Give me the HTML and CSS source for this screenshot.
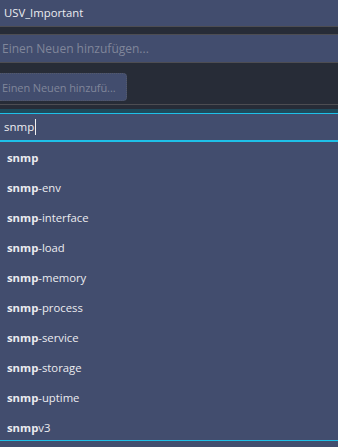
FILE: index.html
```html
<!DOCTYPE html>
<html>
<head>
    <meta charset="UTF-8">
    <title>USV_Important</title>
    <link rel="stylesheet" href="styles.css">
</head>
<body>
    <div class="header">USV_Important</div>

    <div class="gap"></div>

    <div class="new-input">Einen Neuen hinzufügen...</div>

    <div class="button-row">
        <div class="new-button">Einen Neuen hinzufü...</div>
    </div>

    <div class="search-area">
        <div class="search-input">snmp<span class="caret"></span></div>

        <!-- Vorschläge -->
        <div class="suggestions">
            <div class="suggestion"><b>snmp</b></div>
            <div class="suggestion"><b>snmp</b>-env</div>
            <div class="suggestion"><b>snmp</b>-interface</div>
            <div class="suggestion"><b>snmp</b>-load</div>
            <div class="suggestion"><b>snmp</b>-memory</div>
            <div class="suggestion"><b>snmp</b>-process</div>
            <div class="suggestion"><b>snmp</b>-service</div>
            <div class="suggestion"><b>snmp</b>-storage</div>
            <div class="suggestion"><b>snmp</b>-uptime</div>
            <div class="suggestion"><b>snmp</b>v3</div>
        </div>
    </div>
</body>
</html>
```

FILE: styles.css
```css
body {
    margin: 0;
    width: 338px;
    height: 447px;
    overflow: hidden;
    background-color: #424d6e;
    font-family: "Open Sans", "Noto Sans", sans-serif;
    font-size: 11.3px;
    color: #ececf0;
}

.header {
    height: 26px;
    line-height: 25px;
    padding-left: 4px;
    background-color: #424d6e;
    border-bottom: 1px solid #4d4d52;
}

.gap {
    height: 7px;
    background-color: #272c37;
    border-bottom: 1px solid #4d4d52;
}

.new-input {
    height: 27px;
    line-height: 27px;
    padding-left: 2px;
    font-size: 12px;
    color: #80869a;
    background-color: #424d6e;
    border-bottom: 1px solid #4d4d52;
}

.button-row {
    height: 42px;
    padding-top: 10px;
    box-sizing: border-box;
    background-color: #272c37;
    border-bottom: 1px solid #4d4d52;
}

.new-button {
    width: 127px;
    height: 28px;
    line-height: 27px;
    padding-left: 2px;
    box-sizing: border-box;
    border: 1px dotted #545a6a;
    border-left: none;
    border-radius: 0 4px 4px 0;
    background-color: #424d6e;
    font-size: 11px;
    letter-spacing: -0.1px;
    color: #80869a;
    white-space: nowrap;
}

.search-area {
    padding-top: 4px;
    background-color: #272c37;
}

.search-input {
    height: 27px;
    line-height: 27px;
    padding-left: 4px;
    background-color: #424d6e;
    border-top: 4px solid #1f4a5b;
    box-shadow: inset 0 1px 0 #1ec0e8;
    border-bottom: 2px solid #1ec0e8;
    font-size: 11.5px;
}

.caret {
    display: inline-block;
    width: 1px;
    height: 16px;
    margin-left: 1px;
    vertical-align: -4px;
    background-color: #f0f0f0;
}

.suggestions {
    height: 299px;
    overflow: hidden;
    padding-top: 1px;
    box-sizing: border-box;
    background-color: #424d6e;
    border-bottom: 1px solid #1ec0e8;
}

.suggestion {
    height: 30px;
    line-height: 30px;
    padding-left: 7px;
}

.suggestion b {
    font-weight: 700;
}
```
